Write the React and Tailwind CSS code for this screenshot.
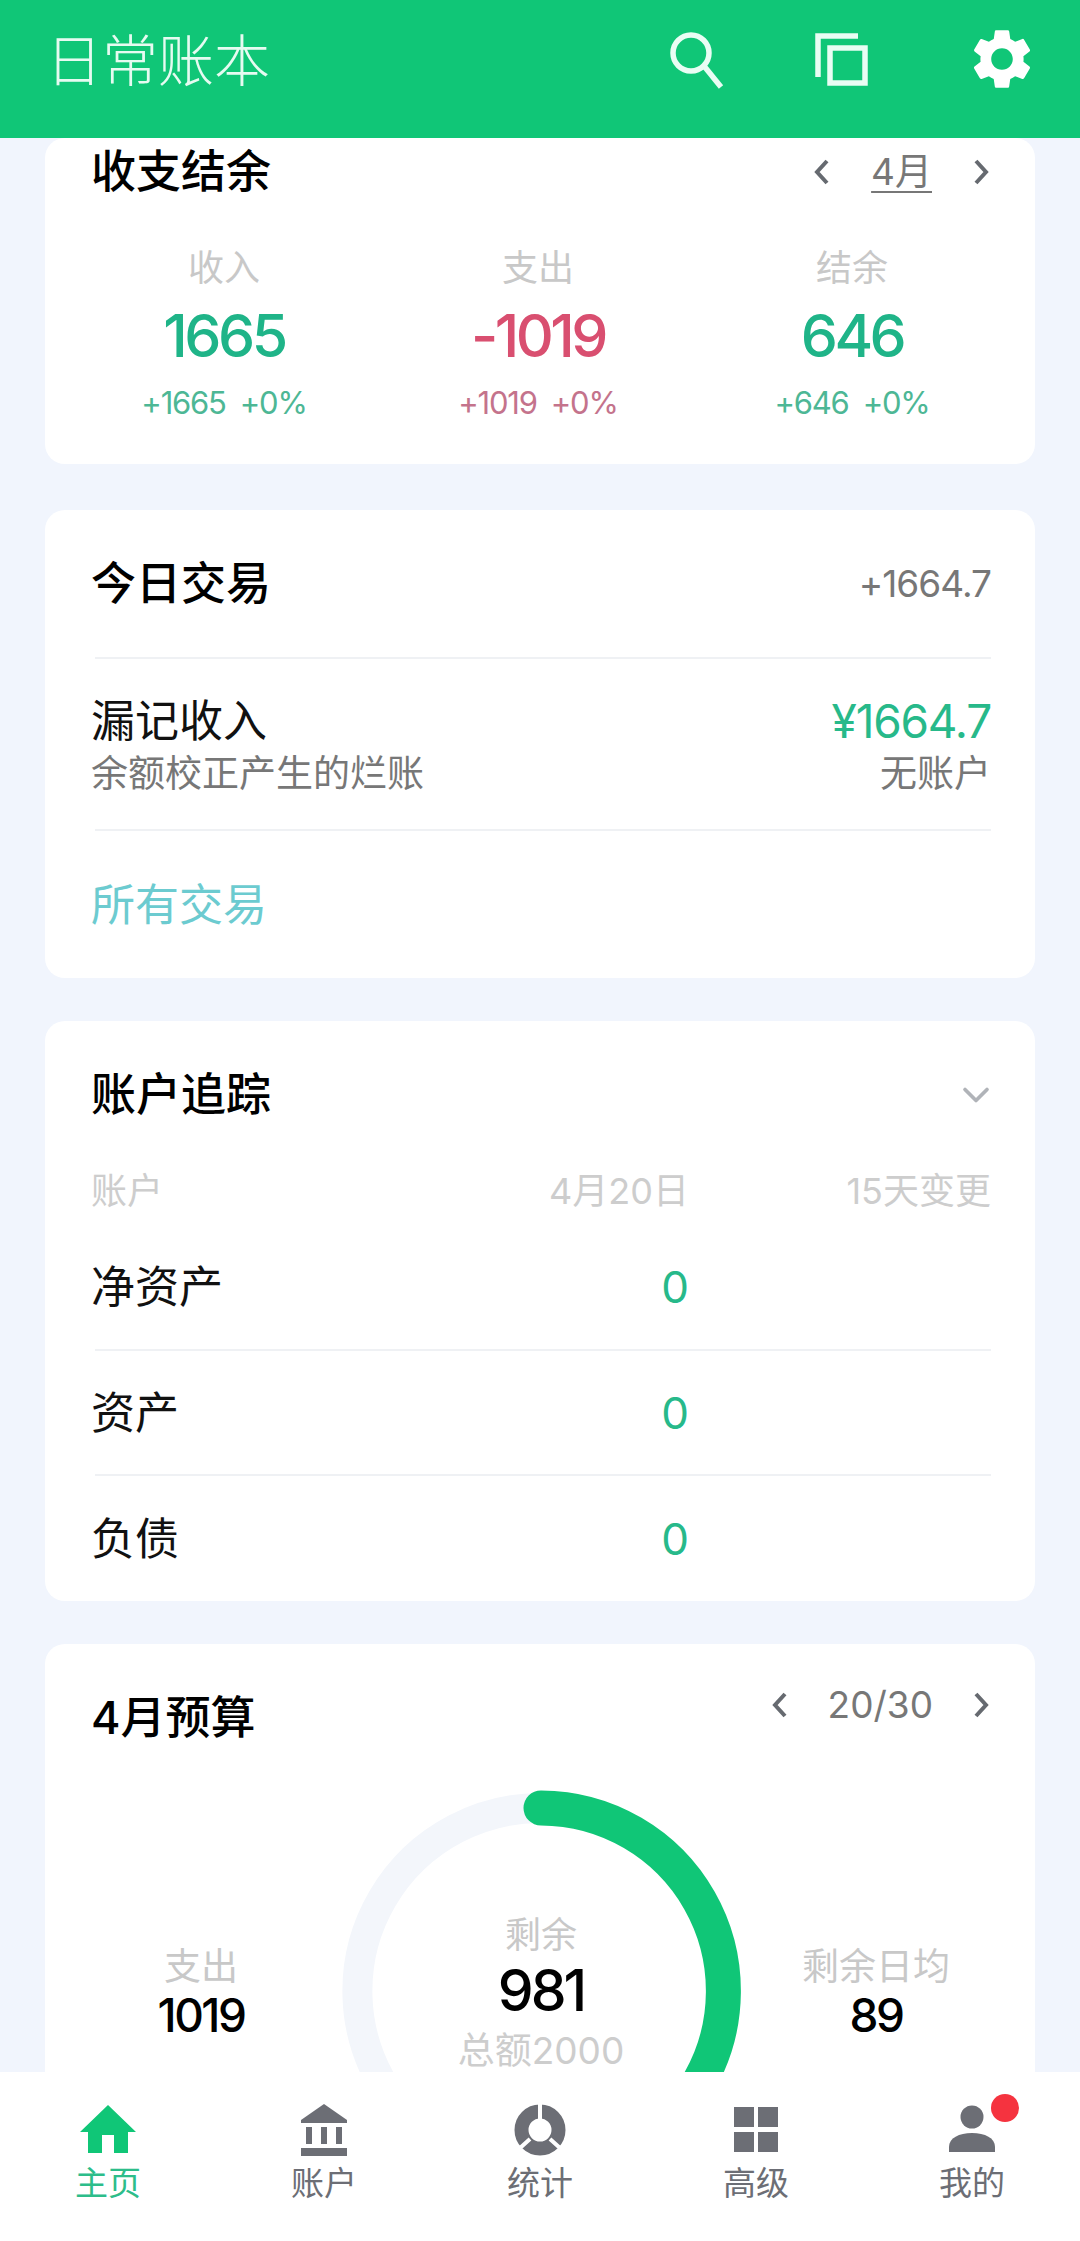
import { ChevronDown } from "lucide-react";
import { MdSettings } from "react-icons/md";

const Chevron = ({ right }) => (
  <svg viewBox="0 0 20 28" className="w-[20px] h-[28px] shrink-0" fill="none" stroke="#666a70" strokeWidth="4">
    <path d={right ? "M5 3l10 11-10 11" : "M15 3 5 14l10 11"} />
  </svg>
);

const Card = ({ className = "", children }) => (
  <section className={`bg-white rounded-[20px] ${className}`}>{children}</section>
);

const Divider = () => <div className="ml-[50px] mr-[44px] h-[2px] bg-[#eff1f4]" />;

const Stat = ({ label, value, sub, pct, valueColor, subColor }) => (
  <div className="flex flex-col items-center">
    <div className="h-[46px] leading-[46px] text-[36px] text-[#c8c8c8]">{label}</div>
    <div className={`h-[90px] leading-[90px] text-[59px] font-medium tracking-[-3.5px] ${valueColor}`}>{value}</div>
    <div className={`h-[44px] leading-[44px] text-[31px] tracking-[-1.2px] flex gap-[14px] ${subColor}`}>
      <span>{sub}</span>
      <span>{pct}</span>
    </div>
  </div>
);

const TrackRow = ({ name }) => (
  <div className="flex items-center h-full pl-[46px] pr-[44px] text-[44px] leading-none">
    <span className="flex-1 text-[#111]">{name}</span>
    <span className="text-[#27b98a]">0</span>
    <span className="w-[302px]" />
  </div>
);

const SideStat = ({ label, value, className }) => (
  <div className={`flex flex-col items-center pt-[163px] ${className}`}>
    <div className="h-[46px] leading-[46px] text-[37px] text-[#c8c8c8] whitespace-nowrap">{label}</div>
    <div className="h-[50px] leading-[50px] text-[46px] font-medium tracking-[-2.5px] text-black">{value}</div>
  </div>
);

const HomeIcon = () => (
  <svg viewBox="0 0 56 52" className="w-[56px] h-[52px]">
    <path fill="#10c677" d="M28 1 56 28H48V49H34V31H22V49H8V28H0Z" />
  </svg>
);

const BankIcon = () => (
  <svg viewBox="0 0 56 52" className="w-[56px] h-[52px]">
    <g fill="#6c6e75">
      <path d="M28 0 51 16V19H5V16Z" />
      <rect x="10" y="23" width="6" height="17" />
      <rect x="25" y="23" width="6" height="17" />
      <rect x="40" y="23" width="6" height="17" />
      <rect x="5" y="44" width="46" height="8" />
    </g>
  </svg>
);

const StatsIcon = () => (
  <svg viewBox="0 0 56 52" className="w-[56px] h-[52px]">
    <circle cx="28" cy="26" r="18.5" fill="none" stroke="#6c6e75" strokeWidth="14" />
    <path d="M28 0V16M8 44 18 35M48 44 38 35" stroke="#fff" strokeWidth="4" fill="none" />
  </svg>
);

const GridIcon = () => (
  <svg viewBox="0 0 56 52" className="w-[56px] h-[52px]">
    <g fill="#6c6e75">
      <rect x="6" y="3" width="20" height="20" />
      <rect x="30" y="3" width="20" height="20" />
      <rect x="6" y="28" width="20" height="20" />
      <rect x="30" y="28" width="20" height="20" />
    </g>
  </svg>
);

const UserIcon = () => (
  <svg viewBox="0 0 56 52" className="w-[56px] h-[52px]">
    <g fill="#6c6e75">
      <circle cx="28" cy="13" r="11.5" />
      <path d="M5 48V43C5 34 15 29 28 29S51 34 51 43V48Z" />
    </g>
  </svg>
);

const tabs = [
  { label: "主页", Icon: HomeIcon, active: true },
  { label: "账户", Icon: BankIcon },
  { label: "统计", Icon: StatsIcon },
  { label: "高级", Icon: GridIcon },
  { label: "我的", Icon: UserIcon, dot: true },
];

export default function App() {
  return (
    <div className="w-[1080px] h-[2241px] flex flex-col overflow-hidden bg-[#f1f5fd] font-['Inter','Noto_Sans_CJK_SC',sans-serif]">
      <header className="h-[138px] shrink-0 bg-[#10c677] flex items-start pl-[46px] text-white">
        <h1 className="flex-1 mt-[25px] text-[56px] leading-[72px] font-light text-[#e6fbf1]">日常账本</h1>
        <div className="flex items-start">
          <svg viewBox="0 0 60 60" className="w-[60px] h-[60px] mt-[30px]" fill="none" stroke="#e9fdf4" strokeWidth="5.5">
            <circle cx="24" cy="23" r="18" />
            <path d="M37 36 54 57" />
          </svg>
          <svg viewBox="0 0 60 60" className="w-[60px] h-[60px] ml-[83px] mt-[30px]" fill="none" stroke="#e9fdf4" strokeWidth="5.5">
            <path d="M48 6H8V47" />
            <rect x="20" y="18" width="35" height="35" />
          </svg>
          <MdSettings className="w-[72px] h-[72px] ml-[96px] mr-[42px] mt-[23px] text-white" />
        </div>
      </header>

      <main className="flex-1 min-h-0 overflow-hidden px-[45px]">
        <Card className="pb-[39px]">
          <div className="h-[68px] flex items-center justify-between pl-[46px] pr-[44px]">
            <h2 className="text-[45px] font-medium text-black">收支结余</h2>
            <div className="flex items-center gap-[39px]">
              <Chevron />
              <span className="text-[37px] text-[#777] underline underline-offset-[6px] decoration-2">4月</span>
              <Chevron right />
            </div>
          </div>
          <div className="grid grid-cols-3 mt-[39px] pl-[22px] pr-[26px]">
            <Stat label="收入" value="1665" sub="+1665" pct="+0%" valueColor="text-[#1fb488]" subColor="text-[#4db795]" />
            <Stat label="支出" value="-1019" sub="+1019" pct="+0%" valueColor="text-[#d94f70]" subColor="text-[#c4738c]" />
            <Stat label="结余" value="646" sub="+646" pct="+0%" valueColor="text-[#1fb488]" subColor="text-[#4db795]" />
          </div>
        </Card>

        <Card className="mt-[46px]">
          <div className="h-[147px] flex items-center justify-between pl-[46px] pr-[44px]">
            <h2 className="text-[45px] font-medium text-black">今日交易</h2>
            <span className="text-[37px] tracking-[-1px] text-[#777]">+1664.7</span>
          </div>
          <Divider />
          <div className="pt-[36px] pb-[28px] pl-[46px] pr-[44px]">
            <div className="h-[52px] flex items-center justify-between">
              <span className="text-[44px] text-[#111]">漏记收入</span>
              <span className="text-[46px] tracking-[-1.2px] text-[#27b98a]">¥1664.7</span>
            </div>
            <div className="h-[54px] flex items-center justify-between text-[37px] text-[#777]">
              <span>余额校正产生的烂账</span>
              <span>无账户</span>
            </div>
          </div>
          <Divider />
          <div className="h-[147px] flex items-center pl-[46px] text-[44px] text-[#6ccbd0]">所有交易</div>
        </Card>

        <Card className="mt-[43px]">
          <div className="h-[148px] flex items-center justify-between pl-[46px] pr-[44px]">
            <h2 className="text-[45px] font-medium text-black">账户追踪</h2>
            <ChevronDown className="w-[44px] h-[44px] -mr-[7px] text-[#b0b3b8]" strokeWidth={2} />
          </div>
          <div className="h-[44px] flex items-center pl-[46px] pr-[44px] text-[36px] text-[#cdcdcd]">
            <span className="flex-1">账户</span>
            <span>4月20日</span>
            <span className="w-[302px] text-right">15天变更</span>
          </div>
          <div className="h-[124px] mt-[12px]"><TrackRow name="净资产" /></div>
          <Divider />
          <div className="h-[123px]"><TrackRow name="资产" /></div>
          <Divider />
          <div className="h-[125px]"><TrackRow name="负债" /></div>
        </Card>

        <Card className="mt-[43px] pb-[40px]">
          <div className="h-[137px] flex items-start justify-between pl-[46px] pr-[44px]">
            <h2 className="mt-[44px] text-[45px] leading-[60px] font-medium text-black">4月预算</h2>
            <div className="mt-[37px] h-[48px] flex items-center gap-[38px]">
              <Chevron />
              <span className="text-[37px] text-[#777]">20/30</span>
              <Chevron right />
            </div>
          </div>
          <div className="flex pl-[36px]">
            <SideStat label="支出" value="1019" className="w-[240px]" />
            <div className="relative w-[440px] h-[400px] shrink-0">
              {/* budget gauge: pale full track with the remaining share on top */}
              <svg viewBox="0 0 440 400" className="w-[440px] h-[400px]" fill="none" strokeLinecap="round" strokeWidth="35">
                <path d="M220 27A183 183 0 1 0 377 303" stroke="#f3f6fb" strokeWidth="30" />
                <path d="M220 27A183 183 0 0 1 377 303" stroke="#10c677" />
              </svg>
              <div className="absolute inset-x-0 top-[131px] flex flex-col items-center">
                <div className="h-[46px] leading-[46px] text-[36px] text-[#c8c8c8]">剩余</div>
                <div className="h-[66px] leading-[66px] text-[57px] font-medium tracking-[-3px] text-black">981</div>
                <div className="mt-[5px] h-[44px] leading-[44px] text-[37px] text-[#cdcdcd]">总额2000</div>
              </div>
            </div>
            <SideStat label="剩余日均" value="89" className="w-[230px]" />
          </div>
        </Card>
      </main>

      <nav className="h-[169px] shrink-0 bg-white grid grid-cols-5">
        {tabs.map(({ label, Icon, active, dot }) => (
          <div key={label} className="relative flex flex-col items-center pt-[32px]">
            <Icon />
            <span className={`mt-[4px] text-[33px] leading-[46px] ${active ? "text-[#2dbd8a]" : "text-[#6c6e75]"}`}>{label}</span>
            {dot && <span className="absolute left-[127px] top-[22px] w-[28px] h-[28px] rounded-full bg-[#f5333f]" />}
          </div>
        ))}
      </nav>
    </div>
  );
}
